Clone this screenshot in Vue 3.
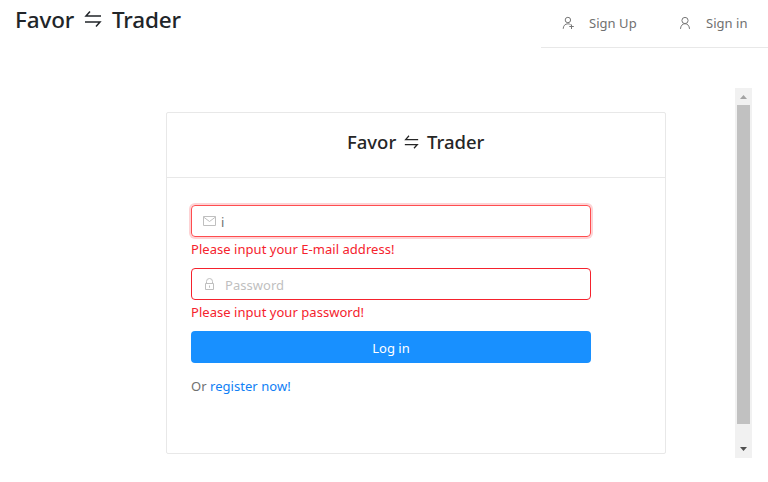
<script setup>
import { ref } from 'vue'

const email = ref('i')
const password = ref('')
</script>

<template>
  <div class="page">
    <header class="header">
      <h1 class="brand brand-large">
        <span class="favor">Favor</span>
        <svg class="swap" viewBox="0 0 18 16"><path d="M17 5H2L6 .5M1 11h15l-4 4.500" /></svg>
        <span class="trader">Trader</span>
      </h1>
      <nav class="menu">
        <a class="item item-up">
          <svg class="icon" viewBox="0 0 14 14"><circle cx="6.900" cy="4" r="2.700" /><path d="M2.200 12.800c.1-3 1.800-5 4.700-5 1.100 0 2 .3 2.700.9M10.500 8.500v4.500M8.300 10.500h4.500" /></svg>
          <span>Sign Up</span>
        </a>
        <a class="item">
          <svg class="icon" viewBox="0 0 14 14"><circle cx="7" cy="4.500" r="3.100" /><path d="M2.500 12.900c.1-3 1.900-5.200 4.500-5.200s4.400 2.200 4.500 5.200" /></svg>
          <span>Sign in</span>
        </a>
      </nav>
    </header>

    <main class="content">
      <section class="card">
        <h2 class="brand brand-small">
          <span class="favor">Favor</span>
          <svg class="swap" viewBox="0 0 18 16"><path d="M17 5H2L6 .5M1 11h15l-4 4.500" /></svg>
          <span class="trader">Trader</span>
        </h2>
        <form class="form" @submit.prevent>
          <label class="field focused">
            <svg class="mail" viewBox="0 0 14 14"><path d="M.5 2.500h12v9H.5zM.5 3l6 4.500 6-4.500" /></svg>
            <input v-model="email" type="text" />
          </label>
          <p class="error">Please input your E-mail address!</p>
          <label class="field">
            <svg class="lock" viewBox="0 0 14 14"><path d="M2.500 6.500h8v6h-8zM3.500 6.500V4.500a3 3 0 0 1 6 0v2M6.500 8.500v2.200" /></svg>
            <input v-model="password" class="password" type="password" placeholder="Password" />
          </label>
          <p class="error">Please input your password!</p>
          <button class="login" type="submit"><span>Log in</span></button>
          <p class="alternative">Or <a>register now!</a></p>
        </form>
      </section>
      <aside class="scrollbar">
        <svg class="arrow" viewBox="0 0 17 17"><path d="M5 11h7L8.500 7z" fill="#a3a3a3" /></svg>
        <div class="thumb"></div>
        <svg class="arrow lower" viewBox="0 0 17 17"><path d="M5 6h7l-3.500 4z" fill="#505050" /></svg>
      </aside>
    </main>
  </div>
</template>

<style>
body {
  background: #fff;
}
</style>

<style scoped>
* {
  box-sizing: border-box;
}
.page {
  width: 768px;
  height: 482px;
  overflow: hidden;
  font: 13px/22px "Segoe UI", "Noto Sans", sans-serif;
  letter-spacing: 0.040px;
  color: #707070;
}
.header {
  display: flex;
  justify-content: space-between;
  height: 88px;
}
.brand {
  display: flex;
  margin: 0;
  font-weight: 500;
}
.brand-large {
  padding: 5px 0 0 15px;
  height: 36px;
  font-size: 22.500px;
  letter-spacing: -0.150px;
  line-height: 30px;
  color: #212529;
}
.swap {
  fill: none;
  stroke: currentColor;
  stroke-width: 1.500;
}
.brand-large .favor {
  width: 69px;
}
.brand-large .swap {
  width: 18px;
  height: 16px;
  margin: 6px 10px 0 0;
}
.menu {
  display: flex;
  width: 227px;
  height: 48px;
  border-bottom: 1px solid #e8e8e8;
  padding-left: 20px;
}
.item {
  display: flex;
  align-items: center;
  height: 46px;
}
.item-up {
  width: 117px;
}
.icon {
  width: 14px;
  height: 14px;
  margin-right: 14px;
  fill: none;
  stroke: #777;
  stroke-width: 1;
}
.content {
  display: flex;
  justify-content: space-between;
  padding: 0 16px 0 166px;
}
.card {
  width: 500px;
  height: 342px;
  margin-top: 24px;
  border: 1px solid #e8e8e8;
  border-radius: 2px;
}
.brand-small {
  height: 65px;
  padding: 16px 0 0 180px;
  border-bottom: 1px solid #e8e8e8;
  font-size: 18.500px;
  line-height: 26px;
  letter-spacing: 0;
  color: #262626;
}
.brand-small .favor {
  width: 57px;
}
.brand-small .swap {
  width: 15px;
  height: 14px;
  margin: 6px 8px 0 0;
}
.form {
  display: flex;
  flex-direction: column;
  width: 400px;
  margin: 27px 0 0 24px;
}
.field {
  display: flex;
  align-items: center;
  height: 32px;
  padding: 0 11px;
  border: 1px solid #f5222d;
  border-radius: 4px;
}
.focused {
  border-color: #ff4d4f;
  box-shadow: 0 0 0 2px rgba(245, 34, 45, 0.2);
}
.mail,
.lock {
  width: 14px;
  height: 14px;
  flex: none;
  fill: none;
  stroke: #bfbfbf;
  stroke-width: 1;
}
input {
  flex: 1;
  min-width: 0;
  height: 28px;
  margin: 2px 0 0 4px;
  padding: 0;
  border: 0;
  outline: 0;
  background: transparent;
  font: inherit;
  letter-spacing: inherit;
  color: #707070;
}
.password {
  margin-left: 8px;
}
input::placeholder {
  color: #bfbfbf;
  opacity: 1;
}
.error {
  height: 31px;
  margin: 0;
  padding-top: 1px;
  color: #f5222d;
}
.login {
  height: 32px;
  border: 0;
  border-radius: 4px;
  padding: 2px 0 0;
  background: #1890ff;
  color: #fff;
  font: inherit;
  letter-spacing: inherit;
}
.alternative {
  margin: 12px 0 0;
}
.alternative a {
  color: #1080f5;
}
.scrollbar {
  display: flex;
  flex-direction: column;
  align-items: center;
  width: 17px;
  height: 370px;
  background: #f1f1f1;
}
.arrow {
  width: 17px;
  height: 17px;
}
.thumb {
  width: 13px;
  height: 319px;
  background: #c1c1c1;
}
.lower {
  margin-top: auto;
}
</style>
